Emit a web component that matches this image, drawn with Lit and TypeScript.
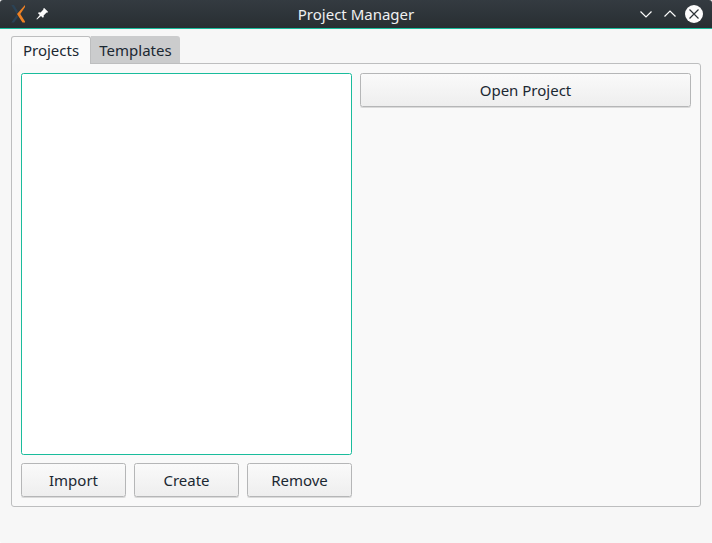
import { LitElement, html, css } from "lit";
import { customElement, property, state } from "lit/decorators.js";
import { classMap } from "lit/directives/class-map.js";

@customElement("push-button")
class PushButton extends LitElement {
  @property() label = "";
  static styles = css`
    :host { display: block; min-width: 0; }
    button {
      display: block; box-sizing: border-box; width: 100%; height: 34px; margin: 0;
      padding: 1px 0 0; border: 1px solid #b5b6b7; border-radius: 2.5px;
      background: linear-gradient(#fafafa, #eeeeee);
      box-shadow: 0 1px 0 #dadada;
      font: inherit; color: #1b2832; text-align: center; line-height: 31px;
    }
  `;
  render() {
    return html`<button>${this.label}</button>`;
  }
}

@customElement("title-bar")
class TitleBar extends LitElement {
  @property() caption = "";
  static styles = css`
    :host {
      display: grid; grid-template-columns: 60px 1fr 60px; align-items: center;
      height: 28px; border-bottom: 1px solid #1abc9c;
      background: linear-gradient(#343b41, #282e32); color: #eff0f1;
      border-radius: 3px 3px 0 0;
    }
    svg { display: block; }
    .caption { text-align: center; line-height: 28px; height: 28px; white-space: nowrap; }
    .right { margin-left: -20px; }
  `;
  render() {
    return html`
      <svg width="60" height="28" viewBox="0 0 60 28">
        <path d="M11.3 5H14L18 11.5L16.8 14ZM16.8 15L18 17L14 22.5H11.3Z" fill="#2b4357" />
        <path d="M25 5L17 14L22.5 22.5H25V21.5L20.3 14L25 7Z" fill="#ee8124" />
        <path d="M44.2 8L48 11.8L47.4 12.8L46.6 12.6L43.6 15.4L43.8 17L42.8 17.8L41 16L37 19.6L36.4 19L39.8 15L38 13.2L38.8 12.2L40.6 12.4L43.4 9.4L43.2 8.8Z" fill="#fcfcfc" />
      </svg>
      <div class="caption">${this.caption}</div>
      <svg class="right" width="80" height="28" viewBox="632 0 80 28" fill="none" stroke="#fcfcfc" stroke-width="1.2">
        <path d="M640.5 11.5L646 17L651.5 11.5M664.5 16.5L670 11L675.5 16.5" />
        <circle cx="694" cy="14" r="9" fill="#fcfcfc" stroke="none" />
        <path d="M689.5 9.5L698.5 18.5M698.5 9.5L689.5 18.5" stroke="#2c3237" />
      </svg>
    `;
  }
}

@customElement("app-root")
class AppRoot extends LitElement {
  @state() current = "Projects";
  static styles = css`
    :host {
      display: flex; flex-direction: column; box-sizing: border-box; height: 543px;
      background: #f7f7f7; color: #1b2832; overflow: hidden;
      font: 15px "Noto Sans", sans-serif; border-radius: 0 0 2px 2px;
    }
    .content { flex: 1; display: flex; flex-direction: column; padding: 7px 11px 36px; }
    .tabs { display: flex; align-items: flex-start; height: 27px; }
    .tab {
      box-sizing: border-box; height: 27px; width: 89px; text-align: center; line-height: 28px;
      background: #cbcccd; border-radius: 0 3px 0 0; cursor: default;
    }
    .tab.active {
      width: 80px; height: 28px; line-height: 27px; background: #fafafa;
      border: 1px solid #bdbebf; border-bottom: 0; border-radius: 3px 3px 0 0; z-index: 1;
    }
    .panel {
      flex: 1; box-sizing: border-box; border: 1px solid #bdbebf; border-radius: 0 3px 3px 3px;
      background: #f9f9f9; padding: 9px; display: grid;
      grid-template-columns: 331px 331px; column-gap: 8px;
    }
    .left { display: flex; flex-direction: column; gap: 8px; }
    .list {
      flex: 1; box-sizing: border-box; background: #fff; border: 1px solid #1abc9c; border-radius: 2.5px;
    }
    .actions { display: grid; grid-template-columns: repeat(3, 105px); gap: 8px; }
  `;
  render() {
    return html`
      <title-bar caption="Project Manager"></title-bar>
      <div class="content">
        <div class="tabs">
          ${["Projects", "Templates"].map(
            (name) => html`<div class=${classMap({ tab: true, active: name === this.current })}>${name}</div>`
          )}
        </div>
        <div class="panel">
          <div class="left">
            <div class="list"></div>
            <div class="actions">
              ${["Import", "Create", "Remove"].map((l) => html`<push-button label=${l}></push-button>`)}
            </div>
          </div>
          <push-button label="Open Project"></push-button>
        </div>
      </div>
    `;
  }
}
